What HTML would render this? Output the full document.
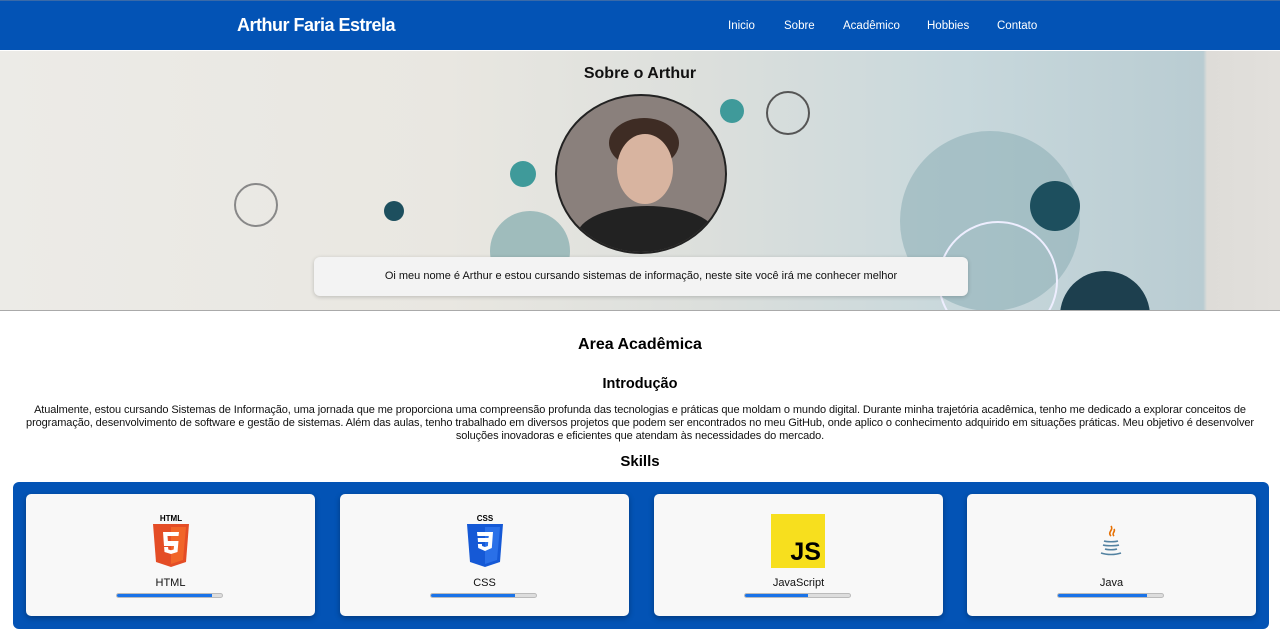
<!DOCTYPE html><html><head><style>
body{margin:0;font-family:"Liberation Sans",sans-serif;background:#fff;width:1280px;height:637px;overflow:hidden;position:relative}
nav{position:absolute;top:0;left:0;width:1280px;height:50px;background:#0353b5;border-top:1px solid #3a6aa8;box-sizing:border-box}
nav .t{position:absolute;left:237px;top:14px;color:#fff;font-weight:bold;font-size:18px;letter-spacing:-0.5px}
nav a{position:absolute;top:19px;color:#fff;font-size:11.5px;text-decoration:none}
.hero{position:absolute;top:51px;left:0;width:1280px;height:259px;background:linear-gradient(90deg,#ecebe7 0%,#e9e7e1 35%,#dcdfdc 55%,#c8d8dc 75%,#b9ccd2 94%,#dedcd8 94.3%,#e2e0dc 100%);border-bottom:1px solid #aaa;overflow:hidden}
.c{position:absolute;border-radius:50%}
h2{position:absolute;margin:0;width:1280px;text-align:center;font-weight:bold}
.p{position:absolute;top:404px;left:20px;width:1240px;text-align:center;font-size:11px;letter-spacing:-0.1px;line-height:13px;color:#111}
.box{position:absolute;left:13px;top:482px;width:1256px;height:147px;background:#0353b5;border-radius:6px}
.card{position:absolute;top:12px;width:289px;height:122px;background:#f8f8f8;border-radius:5px;box-shadow:0 2px 6px rgba(0,0,0,.3);text-align:center}
.card .n{position:absolute;top:83px;width:100%;font-size:11px;color:#111}
.bar{position:absolute;left:90px;top:99px;width:107px;height:5px;background:#ddd;border-radius:3px;border:1px solid #bbb;box-sizing:border-box;overflow:hidden}
.bar i{display:block;height:100%;background:#1a73e8}
</style></head><body>
<nav><div class="t">Arthur Faria Estrela</div>
<a style="left:728px">Inicio</a><a style="left:784px">Sobre</a><a style="left:843px">Acadêmico</a><a style="left:927px">Hobbies</a><a style="left:997px">Contato</a></nav>
<div class="hero">
<div class="c" style="left:234px;top:132px;width:44px;height:44px;border:2px solid #888;box-sizing:border-box"></div>
<div class="c" style="left:384px;top:150px;width:20px;height:20px;background:#1d4f5e"></div>
<div class="c" style="left:510px;top:110px;width:26px;height:26px;background:#3f9a9a"></div>
<div class="c" style="left:490px;top:160px;width:80px;height:80px;background:#9fbcbc"></div>
<div class="c" style="left:720px;top:48px;width:24px;height:24px;background:#3f9a9a"></div>
<div class="c" style="left:766px;top:40px;width:44px;height:44px;border:2px solid #555;box-sizing:border-box"></div>
<div class="c" style="left:900px;top:80px;width:180px;height:180px;background:#8fb0b8;opacity:.6"></div>
<div class="c" style="left:1030px;top:130px;width:50px;height:50px;background:#1d4f5e"></div>
<div class="c" style="left:1060px;top:220px;width:90px;height:90px;background:#1d3f4e"></div>
<div class="c" style="left:938px;top:170px;width:120px;height:120px;border:2px solid #eef;box-sizing:border-box"></div>
<div class="c" style="left:555px;top:43px;width:172px;height:160px;background:#8a807c;border:2px solid #222;box-sizing:border-box;overflow:hidden">
 <div class="c" style="left:52px;top:22px;width:70px;height:50px;background:#3e2c24"></div>
 <div class="c" style="left:60px;top:38px;width:56px;height:70px;background:#d8b4a0"></div>
 <div style="position:absolute;left:20px;top:110px;width:140px;height:60px;background:#222;border-radius:50% 50% 0 0"></div>
</div>
<div style="position:absolute;left:314px;top:206px;width:654px;height:39px;background:#f3f3f3;border-radius:6px;box-shadow:0 1px 4px rgba(0,0,0,.2);text-align:center;line-height:38px;font-size:11px;color:#111">Oi meu nome é Arthur e estou cursando sistemas de informação, neste site você irá me conhecer melhor</div>
<div style="position:absolute;top:14px;width:1280px;text-align:center;font-size:16px;font-weight:bold;color:#111">Sobre o Arthur</div>
</div>
<h2 style="top:336px;font-size:16px">Area Acadêmica</h2>
<h2 style="top:376px;font-size:14.5px">Introdução</h2>
<div class="p">Atualmente, estou cursando Sistemas de Informação, uma jornada que me proporciona uma compreensão profunda das tecnologias e práticas que moldam o mundo digital. Durante minha trajetória acadêmica, tenho me dedicado a explorar conceitos de programação, desenvolvimento de software e gestão de sistemas. Além das aulas, tenho trabalhado em diversos projetos que podem ser encontrados no meu GitHub, onde aplico o conhecimento adquirido em situações práticas. Meu objetivo é desenvolver soluções inovadoras e eficientes que atendam às necessidades do mercado.</div>
<h2 style="top:453px;font-size:15px">Skills</h2>
<div class="box">
<div class="card" style="left:13px"><svg style="position:absolute;left:125px;top:20px" width="40" height="56" viewBox="0 0 40 56"><text x="20" y="7" font-size="8" font-weight="bold" text-anchor="middle" font-family="Liberation Sans">HTML</text><path d="M2 10h36l-3 38-15 5-15-5z" fill="#e44d26"/><path d="M20 13v37l12-4 3-33z" fill="#f16529"/><path d="M12 18h16l-.5 4H16.5l.4 5h10.6l-1 11-6.5 2-6.5-2-.4-5h4l.2 2.5 2.7.7 2.7-.7.3-3.5H13z" fill="#fff"/></svg><div class="n">HTML</div><div class="bar"><i style="width:90%"></i></div></div>
<div class="card" style="left:327px"><svg style="position:absolute;left:125px;top:20px" width="40" height="56" viewBox="0 0 40 56"><text x="20" y="7" font-size="8" font-weight="bold" text-anchor="middle" font-family="Liberation Sans">CSS</text><path d="M2 10h36l-3 38-15 5-15-5z" fill="#1559d6"/><path d="M20 13v37l12-4 3-33z" fill="#2a70e8"/><path d="M12 18h16l-1.2 16-6.8 3-6.8-3-.3-4h4l.2 2 2.9 1 2.9-1 .3-4H13l-.3-4h10.8l.3-2H12.4z" fill="#fff"/></svg><div class="n">CSS</div><div class="bar"><i style="width:80%"></i></div></div>
<div class="card" style="left:641px"><div style="position:absolute;left:117px;top:20px;width:54px;height:54px;background:#f7df1e"><span style="position:absolute;right:4px;bottom:1px;font-size:25px;font-weight:bold;color:#000">JS</span></div><div class="n">JavaScript</div><div class="bar"><i style="width:60%"></i></div></div>
<div class="card" style="left:954px"><svg style="position:absolute;left:130px;top:30px" width="28" height="34" viewBox="0 0 28 34"><path d="M14 2c3 4-4 6 0 10M17 5c2 3-3 4 0 7" stroke="#e76f00" stroke-width="1.6" fill="none"/><path d="M7 17c3 1 11 1 14 0M6 21c3 1 13 1 16 0M8 25c3 1 9 1 12 0M4 29c6 2 14 2 20 0" stroke="#5382a1" stroke-width="1.6" fill="none"/></svg><div class="n">Java</div><div class="bar"><i style="width:85%"></i></div></div>
</div>
</body></html>
